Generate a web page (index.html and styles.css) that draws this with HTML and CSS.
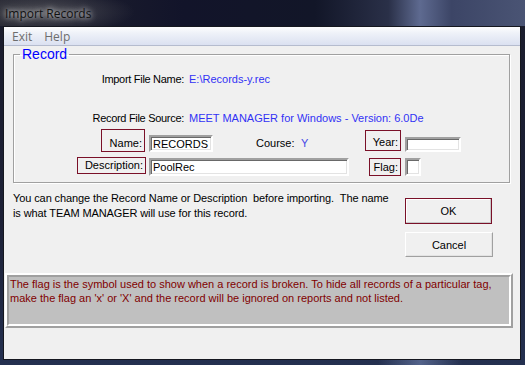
FILE: index.html
```html
<!DOCTYPE html>
<html lang="en">
<head>
    <meta charset="UTF-8">
    <meta name="viewport" content="width=device-width, initial-scale=1.0">
    <title>Import Records</title>
    <link rel="stylesheet" href="styles.css">
</head>
<body>
    <div class="titlebar">
        <span class="title">Import Records</span>
    </div>

    <div class="window">
        <div class="menubar">
            <span class="menu-item">Exit</span>
            <span class="menu-item">Help</span>
        </div>

        <div class="client">
            <fieldset class="group">
                <legend class="group-title">Record</legend>

                <div class="info-row row-file">
                    <span class="info-label">Import File Name:</span>
                    <span class="info-value">E:\Records-y.rec</span>
                </div>
                <div class="info-row row-source">
                    <span class="info-label">Record File Source:</span>
                    <span class="info-value">MEET MANAGER for Windows - Version: 6.0De</span>
                </div>

                <div class="field-row row-name">
                    <span class="tag tag-name">Name:</span>
                    <input class="edit edit-name" type="text" value="RECORDS">
                    <span class="course-label">Course:</span>
                    <span class="course-value">Y</span>
                    <span class="tag tag-year">Year:</span>
                    <input class="edit edit-year" type="text" value="">
                </div>
                <div class="field-row row-desc">
                    <span class="tag tag-desc">Description:</span>
                    <input class="edit edit-desc" type="text" value="PoolRec">
                    <span class="tag tag-flag">Flag:</span>
                    <input class="edit edit-flag" type="text" value="">
                </div>
            </fieldset>

            <div class="actions">
                <p class="hint">You can change the Record Name or Description &nbsp;before importing. &nbsp;The name is what TEAM MANAGER will use for this record.</p>
                <div class="buttons">
                    <button class="btn btn-default">OK</button>
                    <button class="btn">Cancel</button>
                </div>
            </div>

            <div class="note">
                <div class="note-inner">The flag is the symbol used to show when a record is broken. To hide all records of a particular tag, make the flag an 'x' or 'X' and the record will be ignored on reports and not listed.</div>
            </div>
        </div>
    </div>
</body>
</html>
```

FILE: styles.css
```css
body {
    margin: 0;
    width: 525px;
    height: 365px;
    overflow: hidden;
    font-family: 'Liberation Sans', Arial, sans-serif;
    font-size: 11px;
    color: #000;
    background:
        linear-gradient(90deg, transparent 0, transparent 72%, rgba(140, 160, 210, 0.45) 80%, transparent 88%),
        linear-gradient(180deg, #1a1c2c 0, #1c2036 60%, #243050 100%);
}

.titlebar {
    height: 26px;
    display: flex;
    align-items: center;
    padding-left: 5px;
    background:
        radial-gradient(ellipse 90px 22px at 45px 12px, rgba(120, 120, 120, 0.5), transparent),
        linear-gradient(90deg, #22232f 0, #12142a 35%, #121628 60%, #2a3048 74%, #5e6a90 80%, #3c4566 86%, #4a5474 100%);
}
.title {
    font-family: 'Open Sans', 'Noto Sans', sans-serif;
    font-size: 12px;
    color: #111;
    text-shadow: 0 0 5px rgba(255, 255, 255, 0.8), 0 0 9px rgba(255, 255, 255, 0.6);
}

.window {
    margin-left: 3px;
    width: 516px;
    height: 332px;
    border: 1px solid #15171f;
    background: #f0f0f0;
}

.menubar {
    height: 18px;
    display: flex;
    align-items: center;
    gap: 12px;
    padding-left: 8px;
    border-bottom: 1px solid #b5bcce;
    background: linear-gradient(180deg, #fdfdfe 0, #eef1f8 35%, #dbe1f1 100%);
}
.menu-item {
    font-family: 'Open Sans', 'Noto Sans', sans-serif;
    font-size: 12px;
    color: #6d6d6d;
}

.group {
    margin: 0 0 0 9px;
    padding: 0 0 6px 0;
    width: 495px;
    border: 1px solid #a0a0a0;
    box-shadow: inset 1px 1px #fff, 1px 1px #fff;
}
.group-title {
    margin-left: 6px;
    padding: 0 2px;
    font-size: 14px;
    line-height: 16px;
    color: #0000ff;
}

.info-row {
    display: flex;
    line-height: 14px;
}
.row-file {
    margin-top: 10px;
}
.row-source {
    margin-top: 25px;
}
.info-label {
    width: 170px;
    text-align: right;
    letter-spacing: -0.3px;
}
.info-value {
    margin-left: 5px;
    color: #3232f5;
}

.field-row {
    display: flex;
    align-items: flex-start;
    line-height: 14px;
}
.row-name {
    margin-top: 4px;
}
.row-desc {
    margin-top: 5px;
}

.tag {
    box-sizing: border-box;
    display: flex;
    align-items: flex-end;
    justify-content: flex-end;
    padding: 0 2px 1px 0;
    border: 1px solid #7a1028;
}
.tag-name {
    margin-left: 87px;
    width: 44px;
    height: 23px;
}
.tag-year {
    margin: 1px 0 0 56px;
    width: 36px;
    height: 21px;
}
.tag-desc {
    margin-left: 63px;
    width: 69px;
    height: 17px;
}
.tag-flag {
    margin: 1px 0 0 20px;
    width: 32px;
    height: 18px;
}

.edit {
    box-sizing: border-box;
    margin: 0;
    padding: 0 2px;
    font-family: 'Liberation Sans', Arial, sans-serif;
    font-size: 11px;
    color: #000;
    background: #fff;
    border: 2px solid;
    border-color: #a0a0a0 #fff #fff #a0a0a0;
    box-shadow: inset 1px 1px #696969, inset -1px -1px #e3e3e3;
    outline: none;
}
.edit-name {
    margin: 6px 0 0 4px;
    width: 64px;
    height: 17px;
}
.edit-year {
    margin: 8px 0 0 4px;
    width: 56px;
    height: 15px;
}
.edit-desc {
    margin: 1px 0 0 3px;
    width: 200px;
    height: 18px;
}
.edit-flag {
    margin: 1px 0 0 4px;
    width: 16px;
    height: 18px;
}

.course-label {
    margin: 7px 0 0 43px;
    width: 36px;
}
.course-value {
    margin: 7px 0 0 9px;
    width: 8px;
    color: #4646e6;
}

.actions {
    display: flex;
    align-items: flex-start;
    margin-top: 8px;
}
.hint {
    margin: 0 0 0 9px;
    width: 385px;
    line-height: 15px;
    letter-spacing: -0.1px;
}
.buttons {
    display: flex;
    flex-direction: column;
    gap: 8px;
    margin: 7px 0 0 7px;
}
.btn {
    box-sizing: border-box;
    width: 88px;
    height: 25px;
    padding: 0;
    font-family: 'Liberation Sans', Arial, sans-serif;
    font-size: 11px;
    color: #000;
    background: #f0f0f0;
    border: 1px solid;
    border-color: #fff #a0a0a0 #a0a0a0 #fff;
    box-shadow: inset -1px -1px #e3e3e3;
}
.btn-default {
    width: 87px;
    height: 26px;
    border: 1px solid #7a1028;
    box-shadow: inset -1px -1px #c8c8c8, inset 1px 1px #fff;
}

.note {
    margin: 16px 0 0 1px;
    width: 508px;
    height: 55px;
    box-sizing: border-box;
    border: 2px solid;
    border-color: #fff #a0a0a0 #a0a0a0 #fff;
    background: #c0c0c0;
}
.note-inner {
    box-sizing: border-box;
    height: 100%;
    padding: 0 0 0 1px;
    border: 2px solid;
    border-color: #a0a0a0 #fff #fff #a0a0a0;
    line-height: 14px;
    color: #800000;
}
```
